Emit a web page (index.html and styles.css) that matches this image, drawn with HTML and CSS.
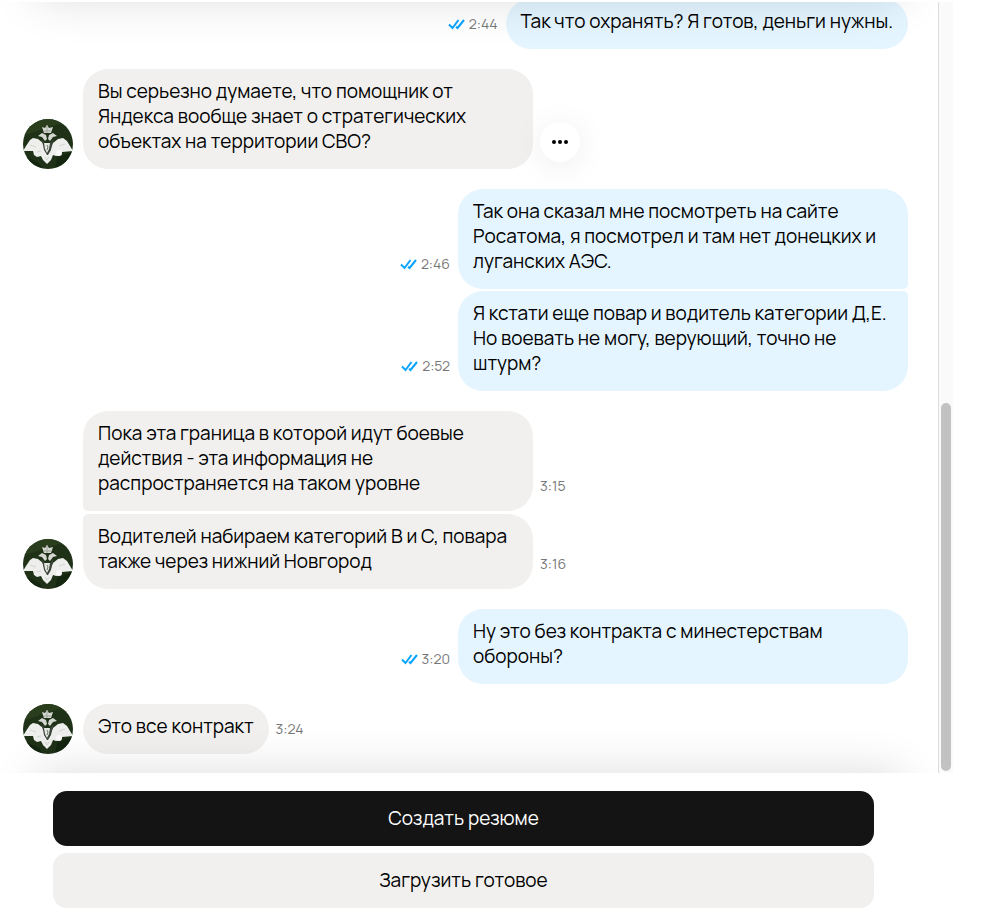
FILE: index.html
```html
<!DOCTYPE html>
<html lang="ru">
<head>
    <meta charset="UTF-8">
    <meta name="viewport" content="width=device-width, initial-scale=1.0">
    <title>Чат</title>
    <link rel="stylesheet" href="styles.css">
</head>
<body>
    <svg class="sprite" aria-hidden="true">
        <symbol id="checks" viewBox="0 0 17 12">
            <path d="M1 6.500l3.500 3.500L10.500 2M8 8.800l1.500 1.200L16 2" fill="none" stroke="#0aa5ff" stroke-width="2"/>
        </symbol>
        <symbol id="eagle" viewBox="0 0 50 50">
            <rect width="50" height="50" fill="#1f3117"/>
            <path d="M0 0h50v9L36 5 20 10 0 17z" fill="#2a3d1c"/>
            <path d="M0 36l16 8 4 6H0zM34 39l16-7v18H32z" fill="#152610"/>
            <path d="M19 8l3 1 2-3 2 3 4-1-2 6h-7z" fill="#d5d8d2"/>
            <path d="M24 6v8M21 12h7" stroke="#9fa69b" stroke-width="1"/>
            <path d="M24 20l-1-4-4-2-4 3 4 1 3 4zM25 20l1-4 4-2 4 3-4 1-3 4z" fill="#d5d8d2"/>
            <path d="M0 32l3-5 4-6 3-2 5 1 5 4 2 5h6l2-5 5-4 5-1 4 3 3 5 3 5-11 1-1 3-5 1-3-1-2 5-4 4-4-4-2-4-4 1-3-2-1-4z" fill="#eeefec"/>
            <path d="M18 20l4 4h5l4-4-2 6-1 5-3 5h-1l-3-5-1-5z" fill="#3d463a"/>
            <path d="M21 24h6l-1 6-2 4-2-4z" fill="#e4e6e2"/>
            <path d="M24 26l1 2-1 3" fill="none" stroke="#6f776d" stroke-width="1"/>
            <path d="M7 26l6 2M42 25l-6 2M14 33l4-1M22 38l2 3 2-3" fill="none" stroke="#d2d5d0" stroke-width="1"/>
            <circle cx="36" cy="34" r="3" fill="#fafafa"/>
        </symbol>
    </svg>

    <main class="chat">
        <section class="messages">
            <div class="group out">
                <div class="message">
                    <p class="bubble">Так что охранять? Я готов, деньги нужны.</p>
                    <div class="meta"><svg class="checks"><use href="#checks"/></svg><time>2:44</time></div>
                </div>
            </div>

            <div class="group in">
                <svg class="avatar"><use href="#eagle"/></svg>
                <div class="stack">
                    <div class="message">
                        <p class="bubble">Вы серьезно думаете, что помощник от Яндекса вообще знает о стратегических объектах на территории СВО?</p>
                        <button class="more" type="button" aria-label="Действия">
                            <svg width="18" height="4" viewBox="0 0 18 4"><circle cx="3" cy="2" r="2"/><circle cx="9" cy="2" r="2"/><circle cx="15" cy="2" r="2"/></svg>
                        </button>
                    </div>
                </div>
            </div>

            <div class="group out">
                <div class="message">
                    <p class="bubble">Так она сказал мне посмотреть на сайте Росатома, я посмотрел и там нет донецких и луганских АЭС.</p>
                    <div class="meta"><svg class="checks"><use href="#checks"/></svg><time>2:46</time></div>
                </div>
                <div class="message">
                    <p class="bubble">Я кстати еще повар и водитель категории Д,Е. Но воевать не могу, верующий, точно не штурм?</p>
                    <div class="meta"><svg class="checks"><use href="#checks"/></svg><time>2:52</time></div>
                </div>
            </div>

            <div class="group in">
                <svg class="avatar"><use href="#eagle"/></svg>
                <div class="stack">
                    <div class="message">
                        <p class="bubble">Пока эта граница в которой идут боевые действия - эта информация не распространяется на таком уровне</p>
                        <div class="meta"><time>3:15</time></div>
                    </div>
                    <div class="message">
                        <p class="bubble">Водителей набираем категорий В и С, повара также через нижний Новгород</p>
                        <div class="meta"><time>3:16</time></div>
                    </div>
                </div>
            </div>

            <div class="group out">
                <div class="message">
                    <p class="bubble">Ну это без контракта с минестерствам обороны?</p>
                    <div class="meta"><svg class="checks"><use href="#checks"/></svg><time>3:20</time></div>
                </div>
            </div>

            <div class="group in">
                <svg class="avatar"><use href="#eagle"/></svg>
                <div class="stack">
                    <div class="message">
                        <p class="bubble">Это все контракт</p>
                        <div class="meta"><time>3:24</time></div>
                    </div>
                </div>
            </div>
        </section>
        <div class="scrollbar"><div class="thumb"></div></div>
    </main>

    <footer class="actions">
        <button class="btn btn-dark" type="button">Создать резюме</button>
        <button class="btn" type="button">Загрузить готовое</button>
    </footer>
</body>
</html>
```

FILE: styles.css
```css
* {
    box-sizing: border-box;
}
body {
    margin: 0;
    padding: 2px 31px 0 0;
    font-family: Manrope, Inter, "Noto Sans", sans-serif;
    font-size: 19px;
    line-height: 25px;
    color: #000;
    background-color: #fff;
}
.sprite {
    display: none;
}
.chat {
    display: flex;
    overflow: hidden;
}
.messages {
    position: relative;
    flex: 1;
    display: flex;
    flex-direction: column;
    gap: 20px;
    margin-top: -3px;
    padding: 0 30px 19px 23px;
}
/* soft shadows over the scrolled edges */
.messages::before,
.messages::after {
    content: "";
    position: absolute;
    left: 36px;
    right: 36px;
    height: 80px;
    box-shadow: 0 0 48px rgba(0, 0, 0, 0.14);
    pointer-events: none;
}
.messages::before {
    bottom: 100%;
}
.messages::after {
    top: 100%;
}
.group,
.stack {
    display: flex;
}
.stack,
.out {
    flex-direction: column;
}
.out {
    gap: 2px;
}
.in {
    align-items: flex-end;
    gap: 10px;
}
.stack {
    gap: 3px;
}
.message {
    display: flex;
    align-items: flex-end;
    gap: 8px;
}
.in .message {
    gap: 7px;
}
.out .message {
    flex-direction: row-reverse;
}
.bubble {
    max-width: 450px;
    margin: 0;
    padding: 10px 15px 15px;
    border-radius: 25px;
    background-color: #f1f0ee;
}
.out .bubble {
    background-color: #e4f5ff;
}
.out .message:not(:last-child) .bubble {
    border-bottom-right-radius: 5px;
}
.out .message:not(:first-child) .bubble {
    border-top-right-radius: 5px;
}
.in .message:not(:last-child) .bubble {
    border-bottom-left-radius: 5px;
}
.in .message:not(:first-child) .bubble {
    border-top-left-radius: 5px;
}
.meta {
    display: flex;
    align-items: center;
    gap: 4px;
    padding-bottom: 15px;
    font-size: 14px;
    line-height: 20px;
    color: #777;
}
.checks {
    width: 17px;
    height: 12px;
}
.avatar {
    flex: none;
    width: 50px;
    height: 50px;
    border-radius: 50%;
}
.more {
    display: flex;
    align-items: center;
    justify-content: center;
    width: 40px;
    height: 40px;
    margin-bottom: 7px;
    padding: 0;
    border: none;
    border-radius: 50%;
    background-color: #fff;
    box-shadow: 0 4px 32px rgba(0, 0, 0, 0.08);
    cursor: pointer;
}
.scrollbar {
    display: flex;
    flex-direction: column;
    justify-content: flex-end;
    width: 15px;
    padding: 2px;
    border-left: 1px solid #dcdcdc;
    background-color: #fafafa;
}
.thumb {
    width: 10px;
    height: 48%;
    border-radius: 5px;
    background-color: #c2c2c2;
}
.actions {
    display: flex;
    flex-direction: column;
    gap: 7px;
    padding: 18px 79px 15px 53px;
}
.btn {
    height: 55px;
    border: none;
    border-radius: 14px;
    font: inherit;
    color: #000;
    background-color: #f1f0ee;
    cursor: pointer;
}
.btn-dark {
    color: #fff;
    background-color: #141414;
}
```
